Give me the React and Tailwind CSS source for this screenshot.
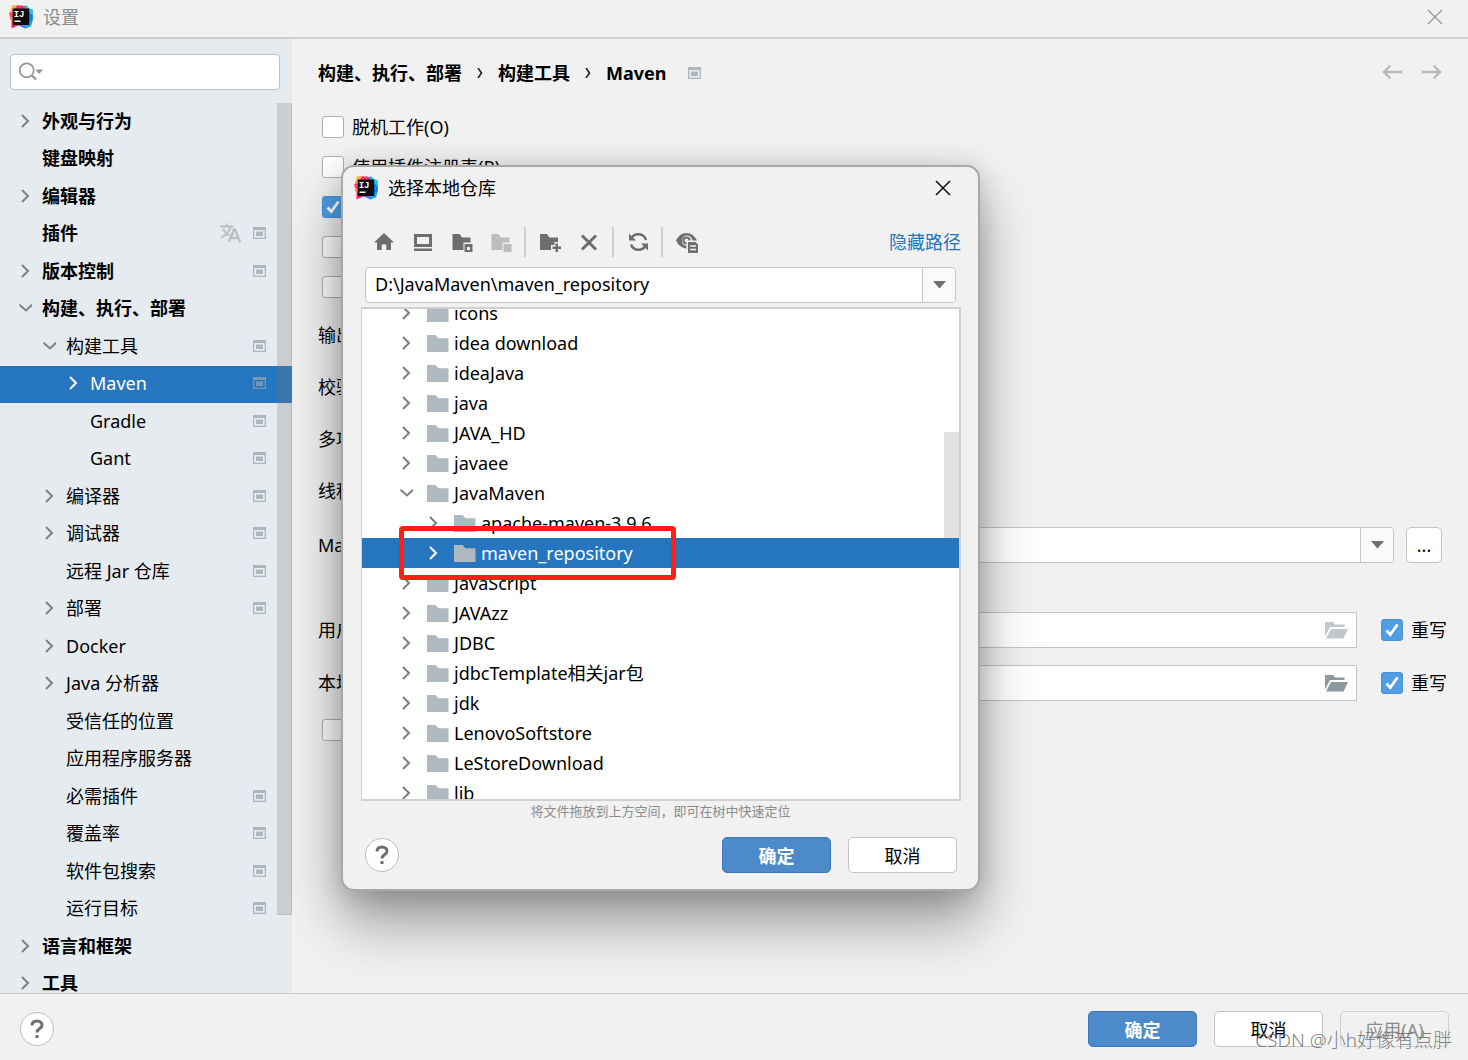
import { useState } from 'react';

const NAV = [
  { label: '外观与行为', level: 0, arrow: 'right' },
  { label: '键盘映射', level: 0 },
  { label: '编辑器', level: 0, arrow: 'right' },
  { label: '插件', level: 0, translate: true, scope: true },
  { label: '版本控制', level: 0, arrow: 'right', scope: true },
  { label: '构建、执行、部署', level: 0, arrow: 'down' },
  { label: '构建工具', level: 1, arrow: 'down', scope: true },
  { label: 'Maven', level: 2, arrow: 'right', scope: true },
  { label: 'Gradle', level: 2, scope: true },
  { label: 'Gant', level: 2, scope: true },
  { label: '编译器', level: 1, arrow: 'right', scope: true },
  { label: '调试器', level: 1, arrow: 'right', scope: true },
  { label: '远程 Jar 仓库', level: 1, scope: true },
  { label: '部署', level: 1, arrow: 'right', scope: true },
  { label: 'Docker', level: 1, arrow: 'right' },
  { label: 'Java 分析器', level: 1, arrow: 'right' },
  { label: '受信任的位置', level: 1 },
  { label: '应用程序服务器', level: 1 },
  { label: '必需插件', level: 1, scope: true },
  { label: '覆盖率', level: 1, scope: true },
  { label: '软件包搜索', level: 1, scope: true },
  { label: '运行目标', level: 1, scope: true },
  { label: '语言和框架', level: 0, arrow: 'right' },
  { label: '工具', level: 0, arrow: 'right' },
];

const FOLDERS = [
  { label: 'icons' },
  { label: 'idea download' },
  { label: 'ideaJava' },
  { label: 'java' },
  { label: 'JAVA_HD' },
  { label: 'javaee' },
  { label: 'JavaMaven', open: true },
  { label: 'apache-maven-3.9.6', child: true },
  { label: 'maven_repository', child: true },
  { label: 'JavaScript' },
  { label: 'JAVAzz' },
  { label: 'JDBC' },
  { label: 'jdbcTemplate相关jar包' },
  { label: 'jdk' },
  { label: 'LenovoSoftstore' },
  { label: 'LeStoreDownload' },
  { label: 'lib' },
];

const INDENT = ['pl-[12px]', 'pl-[36px]', 'pl-[60px]'];

function Logo() {
  return (
    <svg width="24" height="24" viewBox="0 0 24 24" className="shrink-0" aria-hidden="true">
      <path d="M12 2 17 0.500 20 3.500 23.500 4.500 24 14 22 21 16.500 23.500 9 20 12 8Z" fill="#0a84f5" />
      <path d="M15 2.500 17.500 0.500 20 3.500 23.500 4.500 23 10 19 6Z" fill="#1fc3f2" />
      <path d="M20 17 23 16 22 21 16.500 23.500 13 20Z" fill="#18a8f0" />
      <path d="M3 0.500 10 0 10 5 4 11 0.500 8Z" fill="#fdb03c" />
      <path d="M8 0.500 14 0.500 17 4 12 8 5 5Z" fill="#fb2f6b" />
      <path d="M0 8 5 7 5 15 1 12Z" fill="#ff3f78" />
      <path d="M0.500 13 5 12 5 18 2.500 17Z" fill="#fd8a3a" />
      <path d="M2.500 17 4 15.500 12 19 8 21 2.500 23.500Z" fill="#ff1f7d" />
      <path d="M8 19.500 15 19.500 15.500 22.500 11 21Z" fill="#7a5bf0" />
      <rect x="3.700" y="3.500" width="16.500" height="16.500" fill="#100a0c" />
      <text x="4.700" y="12" fontSize="9" fontWeight="700" fill="#fff" fontFamily="Liberation Mono, monospace">IJ</text>
      <rect x="5.500" y="15.500" width="6" height="1.500" fill="#fff" />
    </svg>
  );
}

function Chevron({ dir, className = 'text-[#7f8284]' }) {
  return (
    <svg width="14" height="14" viewBox="0 0 14 14" fill="none" stroke="currentColor" strokeWidth="2" className={className} aria-hidden="true">
      {dir === 'down' ? <path d="M1.500 3.800 8 9.500 14 3.800" /> : <path d="M4 1 10 7 4 13" />}
    </svg>
  );
}

function ScopeIcon({ selected }) {
  const tone = selected ? '#7797b3' : '#abb6be';
  return (
    <svg width="13" height="12" viewBox="0 0 13 12" className="shrink-0" aria-hidden="true">
      <rect width="13" height="12" fill={tone} />
      <rect x="1.300" y="3" width="10.400" height="7.700" fill={selected ? '#2675bf' : '#e9eef1'} />
      <rect x="3" y="4.500" width="7" height="4.500" fill={tone} />
    </svg>
  );
}

function TranslateIcon() {
  return (
    <svg width="21" height="20" viewBox="0 0 21 20" fill="none" stroke="#b9c0c4" strokeWidth="2" aria-hidden="true">
      <path d="M0 3.500H13.500M6.700 0.500V3.500M10.800 3.500C10 8 6 12 1 14.800M3 6C4.500 9 7 11 9.500 12.500" />
      <path d="M8.800 19 14 6.500H15L20 19M10.800 15H18.200" strokeWidth="2.400" />
    </svg>
  );
}

function FolderIcon() {
  return (
    <svg width="22" height="17" viewBox="0 0 22 17" fill="#aeb9c0" className="shrink-0" aria-hidden="true">
      <path d="M0 0H8.500L11.500 3.200H21.500V17H0Z" />
    </svg>
  );
}

function OpenFolder({ className }) {
  return (
    <svg width="23" height="18" viewBox="0 0 23 18" fill="currentColor" className={className} aria-hidden="true">
      <path d="M0 1H8L10 3.500H19.500V6H5L0 15.500Z" />
      <path d="M6 8H23L18.500 17.500H1Z" />
    </svg>
  );
}

function Triangle() {
  return (
    <svg width="13" height="8" viewBox="0 0 13 8" fill="#6e6e6e" aria-hidden="true">
      <path d="M0 0H13L6.500 7.500Z" />
    </svg>
  );
}

function Checkbox({ label, defaultChecked }) {
  return (
    <label className="flex items-center gap-2 whitespace-nowrap">
      <span className="grid size-[22px] shrink-0 place-items-center">
        <input
          type="checkbox"
          defaultChecked={defaultChecked}
          className="peer col-start-1 row-start-1 size-[22px] appearance-none rounded-[3px] border-[1px] border-[#b0b0b0] bg-white checked:border-[#4b93d8] checked:bg-[#4f9ee3]"
        />
        <svg width="14" height="14" viewBox="0 0 14 14" fill="none" stroke="#fff" strokeWidth="2.800" className="pointer-events-none col-start-1 row-start-1 hidden peer-checked:block" aria-hidden="true">
          <path d="M1.500 7.500 5.300 11.500 12.500 1.500" />
        </svg>
      </span>
      {label}
    </label>
  );
}

function Combo({ id, label, value, className }) {
  return (
    <div className={`grid h-[36px] ${className}`}>
      <select id={id} aria-label={label} className="col-start-1 row-start-1 w-full appearance-none rounded-[4px] border border-[#c4c4c4] bg-white pr-10 pb-[2px] pl-[9px]">
        <option>{value}</option>
      </select>
      <span className="pointer-events-none col-start-1 row-start-1 my-px mr-px grid w-[33px] place-items-center justify-self-end rounded-r-[3px] border-l border-[#c4c4c4] bg-[#fafafa]">
        <Triangle />
      </span>
    </div>
  );
}

function Button({ children, primary, disabled }) {
  const tone = primary
    ? 'border-[#3e78bb] bg-[#4d8ac9] font-bold text-white'
    : disabled
      ? 'border-[#cfcfcf] text-[#8c8c8c]'
      : 'border-[#c4c4c4] bg-white';
  return (
    <button type="button" disabled={disabled} className={`h-[36px] w-[109px] rounded-[5px] border pt-[2px] ${tone}`}>
      {children}
    </button>
  );
}

function HelpButton() {
  return (
    <button type="button" aria-label="帮助" className="grid size-[34px] place-items-center rounded-full border-[1px] border-[#bdbdbd] bg-white">
      <svg width="14" height="20" viewBox="0 0 14 20" fill="none" stroke="#6e6e6e" strokeWidth="3" aria-hidden="true">
        <path d="M2 6.500C2 3.500 4 2 7 2S12 3.700 12 6.200C12 9.500 7 9.500 7 13.500" />
        <path d="M7 16V19" />
      </svg>
    </button>
  );
}

function Sidebar() {
  const [active, setActive] = useState('Maven');
  return (
    <aside className="relative flex w-[292px] shrink-0 flex-col overflow-hidden bg-[#e6ebef]">
      <div className="mt-[15px] mr-[12px] mb-[13px] ml-[10px] flex h-[36px] shrink-0 items-center rounded-[4px] border border-[#c0c0c0] bg-white pl-2">
        <svg width="25" height="20" viewBox="0 0 25 20" fill="none" stroke="#8c979f" aria-hidden="true">
          <circle cx="7.700" cy="8.300" r="7" strokeWidth="1.700" />
          <path d="M12.500 13 17 17.500" strokeWidth="2.300" />
          <path d="M16.500 7.500H24L20.200 12Z" fill="#8c979f" stroke="none" />
        </svg>
        <input type="text" aria-label="搜索设置" className="w-full min-w-0 flex-1 bg-transparent px-1 outline-none" />
      </div>
      <ul>
        {NAV.map((item) => {
          const selected = item.label === active;
          return (
            <li key={item.label} className="odd:h-[38px] even:h-[37px]">
              <button
                type="button"
                onClick={() => setActive(item.label)}
                className={`flex h-full w-full items-center pr-[26px] pb-[3px] text-left ${INDENT[item.level]} ${item.level === 0 ? 'font-bold' : ''} ${selected ? 'bg-[#2675bf] text-white' : ''}`}
              >
                <span className="mr-1 grid w-[26px] place-items-center">
                  {item.arrow && <Chevron dir={item.arrow} className={selected ? 'text-white' : 'text-[#7f8284]'} />}
                </span>
                <span className="flex-1">{item.label}</span>
                <span className="flex items-center gap-3">
                  {item.translate && <TranslateIcon />}
                  {item.scope && <ScopeIcon selected={selected} />}
                </span>
              </button>
            </li>
          );
        })}
      </ul>
      <div className="absolute top-[64px] right-0 h-[812px] w-[15px] border-r border-b border-[#7d7d7d]/20 bg-[#7d7d7d]/25" />
    </aside>
  );
}

function PathRow({ id, label, iconClass }) {
  return (
    <div className="flex h-[36px] items-center">
      <label htmlFor={id} className="w-[240px] shrink-0">{label}</label>
      <div className="mr-6 flex h-full flex-1 items-center border border-[#c4c4c4] bg-white pr-2">
        <input id={id} type="text" className="h-full min-w-0 flex-1 px-2 outline-none" />
        <button type="button" aria-label="浏览">
          <OpenFolder className={iconClass} />
        </button>
      </div>
      <Checkbox label="重写" defaultChecked />
    </div>
  );
}

function MavenPage() {
  return (
    <main className="min-w-0 flex-1 pl-[26px]">
      <div className="flex h-[68px] items-center justify-between pr-[26px]">
        <h1 className="flex items-center font-bold">
          <span>构建、执行、部署</span>
          <svg width="6" height="10" viewBox="0 0 6 10" fill="none" stroke="#222" strokeWidth="1.600" className="mx-[15px]" aria-hidden="true"><path d="M1 0 4.500 5 1 10" /></svg>
          <span>构建工具</span>
          <svg width="6" height="10" viewBox="0 0 6 10" fill="none" stroke="#222" strokeWidth="1.600" className="mx-[15px]" aria-hidden="true"><path d="M1 0 4.500 5 1 10" /></svg>
          <span className="mr-[22px]">Maven</span>
          <ScopeIcon />
        </h1>
        <div className="flex gap-5 pb-[2px] text-[#b9b9b9]">
          <button type="button" aria-label="后退">
            <svg width="20" height="16" viewBox="0 0 20 16" fill="none" stroke="currentColor" strokeWidth="2.300"><path d="M20 8H2M8.500 1.500 2 8 8.500 14.500" /></svg>
          </button>
          <button type="button" aria-label="前进">
            <svg width="20" height="16" viewBox="0 0 20 16" fill="none" stroke="currentColor" strokeWidth="2.300"><path d="M0 8H18M11.500 1.500 18 8 11.500 14.500" /></svg>
          </button>
        </div>
      </div>
      <div className="grid auto-rows-[40px] items-center justify-start pl-1">
        <Checkbox label="脱机工作(O)" />
        <Checkbox label="使用插件注册表(R)" />
        <Checkbox label="递归执行目标(G)" defaultChecked />
        <Checkbox label="打印异常堆栈跟踪(T)" />
        <Checkbox label="始终更新快照(S)" />
      </div>
      <div className="mt-[2px] grid auto-rows-[52px] items-center">
        <span>输出级别(L):</span>
        <span>校验和策略(C):</span>
        <span>多项目构建失败策略(F):</span>
        <span>线程计数(T):</span>
      </div>
      <div className="mt-[10px] flex items-center pr-[26px]">
        <label htmlFor="maven-home" className="w-[240px] shrink-0">Maven 主路径(H):</label>
        <Combo id="maven-home" label="Maven 主路径" value="" className="flex-1" />
        <button type="button" className="ml-3 h-[36px] w-[36px] rounded-[5px] border border-[#c4c4c4] bg-white">...</button>
      </div>
      <div className="mt-[49px] flex flex-col gap-[17px] pr-[21px]">
        <PathRow id="user-settings" label="用户设置文件(S):" iconClass="text-[#c2c7ca]" />
        <PathRow id="local-repo" label="本地仓库(R):" iconClass="text-[#8e989f]" />
      </div>
      <div className="mt-[17px] pl-1">
        <Checkbox label="使用 .mvn/maven.config 中的设置" />
      </div>
    </main>
  );
}

function ToolButton({ label, disabled, children }) {
  return (
    <button type="button" aria-label={label} disabled={disabled} className={`grid w-[39px] place-items-center ${disabled ? 'text-[#bdbdbd]' : 'text-[#6e6e6e]'}`}>
      <svg width="24" height="22" viewBox="0 0 24 22" fill="currentColor">{children}</svg>
    </button>
  );
}

function ToolSeparator() {
  return <span className="mr-[4px] ml-[4px] h-full w-[2px] bg-[#d0d0d0]" />;
}

function Toolbar() {
  return (
    <div className="flex h-[30px] items-center">
      <ToolButton label="主目录">
        <path d="M12 2 22 11.500H19V19H14.300V13.500H9.700V19H5V11.500H2Z" />
      </ToolButton>
      <ToolButton label="桌面">
        <path fillRule="evenodd" d="M3 3H21V16H3ZM6 6V13H18V6Z" />
        <rect x="3" y="17.500" width="18" height="2.500" />
      </ToolButton>
      <ToolButton label="项目目录">
        <path d="M2.500 3H9.500L12 6.500H20.500V11.500H13.500V19H2.500Z" />
        <path fillRule="evenodd" d="M14.500 13H22.500V21H14.500ZM17 16V19H20V16Z" />
      </ToolButton>
      <ToolButton label="模块目录" disabled>
        <path d="M2.500 3H9.500L12 6.500H20.500V11.500H13.500V19H2.500Z" />
        <rect x="14.500" y="13" width="8" height="8" />
      </ToolButton>
      <ToolSeparator />
      <ToolButton label="新建文件夹">
        <path d="M2 3H9L11.500 6.500H20V11H16.500V14H13V19H2Z" />
        <path d="M17.500 12.500H20V15.500H23V18H20V21H17.500V18H14.500V15.500H17.500Z" />
      </ToolButton>
      <ToolButton label="删除">
        <path d="M5 4.500 19 18.500M19 4.500 5 18.500" stroke="currentColor" strokeWidth="3" />
      </ToolButton>
      <ToolSeparator />
      <ToolButton label="刷新">
        <path d="M5 8A8 8 0 0 1 20 9M20 13.500A8 8 0 0 1 5 13.500" fill="none" stroke="currentColor" strokeWidth="2.500" />
        <path d="M3 2.500V9.500H10ZM22 19.500V12.500H15Z" />
      </ToolButton>
      <ToolSeparator />
      <ToolButton label="显示隐藏文件">
        <path fillRule="evenodd" d="M1 9.500C3 5 7 2 11.500 2S20 5 22 9.500H17.500C17 6.500 15 4.500 11.800 4.500A5.300 5.300 0 0 0 11.500 15V17.500C7 17 3 14 1 9.500Z" />
        <path d="M14.500 9.500A3 3 0 1 0 11.500 12.500" fill="none" stroke="currentColor" strokeWidth="2.200" />
        <path fillRule="evenodd" d="M13 11H20.500L23 13.500V22H13ZM15 14.300V15.800H21V14.300ZM15 17.800V19.300H21V17.800Z" />
      </ToolButton>
      <a href="#path" className="ml-auto text-[#2675bf]">隐藏路径</a>
    </div>
  );
}

function FolderTree() {
  const [active, setActive] = useState('maven_repository');
  return (
    <div className="relative h-[494px] overflow-hidden border-2 border-l border-[#d0d0d0] bg-white">
      <ul className="-mt-[11px]">
        {FOLDERS.map((f) => {
          const selected = f.label === active;
          return (
            <li key={f.label}>
              <button
                type="button"
                onClick={() => setActive(f.label)}
                className={`flex h-[30px] w-full items-center text-left ${f.child ? 'pl-[58px]' : 'pl-[31px]'} ${selected ? 'bg-[#2675bf] text-white' : ''}`}
              >
                <span className="mr-2 grid w-[26px] place-items-center">
                  <Chevron dir={f.open ? 'down' : 'right'} className={selected ? 'text-white' : 'text-[#7f7f7f]'} />
                </span>
                <FolderIcon />
                <span className="ml-[5px]">{f.label}</span>
              </button>
            </li>
          );
        })}
      </ul>
      <div className="absolute top-[123px] right-0 h-[106px] w-[15px] bg-[#e2e2e2]" />
      {/* red marker round the chosen repository folder */}
      <div className="pointer-events-none absolute top-[217px] left-[37px] h-[54px] w-[277px] rounded-[4px] border-[5px] border-[#ff2013]" />
    </div>
  );
}

function PathDialog() {
  return (
    <section
      role="dialog"
      aria-label="选择本地仓库"
      className="absolute top-[165px] left-[341px] w-[639px] rounded-[13px] border-2 border-[#a8a8a8] bg-[#f1f1f1] pb-[16px] shadow-[0_32px_56px_rgba(0,0,0,0.36),0_4px_28px_rgba(0,0,0,0.16)]"
    >
      <header className="flex h-[42px] items-center pr-[27px] pl-[11px]">
        <Logo />
        <h2 className="ml-[10px] flex-1">选择本地仓库</h2>
        <button type="button" aria-label="关闭">
          <svg width="16" height="16" viewBox="0 0 16 16" stroke="#111" strokeWidth="1.500"><path d="M1 1 15 15M15 1 1 15" /></svg>
        </button>
      </header>
      <div className="mt-[18px] pr-[17px] pl-[21px]">
        <Toolbar />
      </div>
      <div className="mt-[10px] pr-[22px] pl-[22px]">
        <Combo id="repo-path" label="路径" value="D:\JavaMaven\maven_repository" className="" />
      </div>
      <div className="mt-[4px] pr-[17px] pl-[18px]">
        <FolderTree />
      </div>
      <p className="h-[20px] text-center text-[13px] leading-[20px] text-[#8c8c8c]">将文件拖放到上方空间，即可在树中快速定位</p>
      <footer className="mt-[16px] flex items-center gap-[17px] pr-[21px] pl-[22px]">
        <div className="flex-1"><HelpButton /></div>
        <Button primary>确定</Button>
        <Button>取消</Button>
      </footer>
    </section>
  );
}

export default function App() {
  return (
    <div className="relative flex h-screen flex-col overflow-hidden bg-[#f1f1f1] font-['Noto_Sans','Noto_Sans_CJK_SC',sans-serif] text-[18px] leading-[24px] text-black">
      <header className="flex h-[39px] shrink-0 items-center border-b-2 border-[#cfcfcf] pr-[25px] pb-[3px] pl-[9px]">
        <Logo />
        <span className="ml-[10px] flex-1 text-[#8c8c8c]">设置</span>
        <button type="button" aria-label="关闭">
          <svg width="16" height="16" viewBox="0 0 16 16" stroke="#999" strokeWidth="1.400"><path d="M1 1 15 15M15 1 1 15" /></svg>
        </button>
      </header>
      <div className="flex min-h-0 flex-1">
        <Sidebar />
        <MavenPage />
      </div>
      <footer className="flex h-[67px] shrink-0 items-center gap-[17px] border-t border-[#c9cccf] pt-1 pr-[19px] pl-[20px]">
        <div className="flex-1"><HelpButton /></div>
        <Button primary>确定</Button>
        <Button>取消</Button>
        <Button disabled>应用(A)</Button>
      </footer>
      <PathDialog />
      <span className="pointer-events-none absolute right-4 bottom-2 font-light text-[19px] text-[#6f6f6f]/90">CSDN @小h好像有点胖</span>
    </div>
  );
}
